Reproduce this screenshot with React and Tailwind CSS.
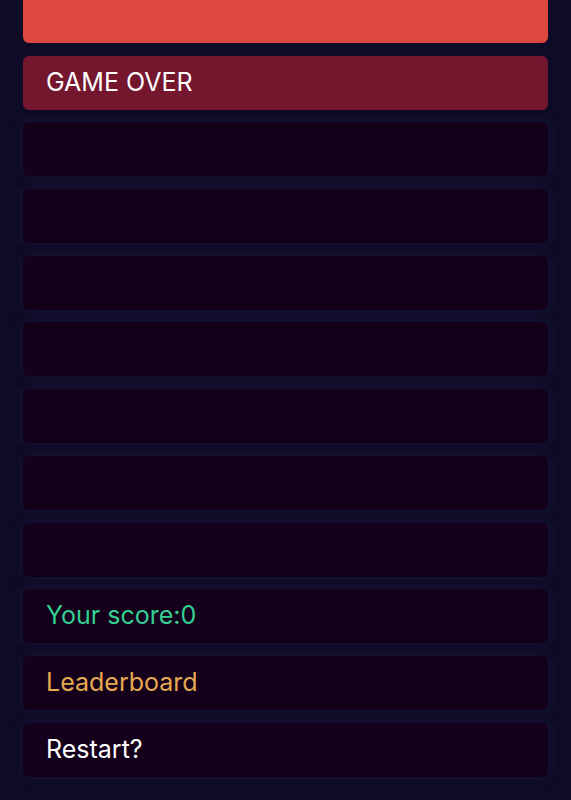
export default function App() {
  const empty = [0, 1, 2, 3, 4, 5, 6];
  const row = "h-[54px] rounded-md bg-[#14001b] flex items-center px-[23px] text-[25px] shadow-[0_0_10px_2px_rgba(30,28,70,0.5)]";
  return (
    <div className="min-h-[800px] w-[571px] bg-[#0e0b26] px-[23px]" style={{ fontFamily: "Inter, 'Noto Sans', sans-serif" }}>
      <div className="flex flex-col gap-[12.7px]">
        <div className="h-[43px] rounded-b-md bg-[#dc4740]" />
        <div className="h-[54px] rounded-md bg-[#75162f] flex items-center px-[23px] text-[25px] text-white">GAME OVER</div>
        {empty.map((i) => (
          <div key={i} className={row} />
        ))}
        <div className={row + " text-[#34cf92]"}>Your score:0</div>
        <div className={row + " text-[#e6a94f]"}>Leaderboard</div>
        <div className={row + " text-white"}>Restart?</div>
      </div>
    </div>
  );
}
